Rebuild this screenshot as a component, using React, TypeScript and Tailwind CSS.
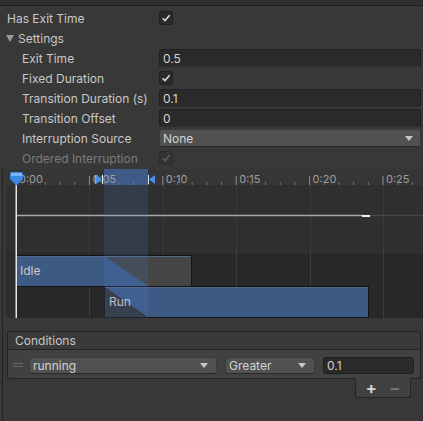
import React from "react";

const Check = ({ dim }: { dim?: boolean }) => (
  <div
    className={`w-[14px] h-[14px] rounded-[3px] border flex items-center justify-center ${
      dim ? "bg-[#333333] border-[#2c2c2c]" : "bg-[#2a2a2a] border-[#1f1f1f]"
    }`}
  >
    <svg width="10" height="10" viewBox="0 0 10 10">
      <path d="M1.6 5.3 L4 7.6 L8.6 2.3" fill="none" stroke={dim ? "#606060" : "#dcdcdc"} strokeWidth="1.5" />
    </svg>
  </div>
);

const Arrow = () => (
  <svg width="8" height="5" viewBox="0 0 8 5">
    <path d="M0 0 H8 L4 5 Z" fill="#c8c8c8" />
  </svg>
);

const Row = ({ label, indent, dim, children }: { label: React.ReactNode; indent?: boolean; dim?: boolean; children?: React.ReactNode }) => (
  <div className="flex h-[18px] items-center mt-[2px]">
    <div className={`w-[159px] shrink-0 whitespace-nowrap pt-[2px] ${indent ? "pl-[22px]" : "pl-[7px]"} ${dim ? "text-[#7c7c7c]" : "text-[#c8c8c8]"}`}>
      {label}
    </div>
    <div className="flex-1 pr-[2px] flex items-center">{children}</div>
  </div>
);

const Field = ({ v }: { v: string }) => (
  <div className="w-full h-[18px] bg-[#2a2a2a] border border-[#212121] border-b-[#2e2e2e] rounded-[3px] flex items-center pl-[3px] pt-[2px] text-[#d2d2d2]">
    {v}
  </div>
);

const Timeline = () => {
  const W = 417;
  const x0 = 10;
  const u = 14.68;
  const ticks = [];
  for (let i = 0; i <= 28; i++) {
    const x = x0 + u * i;
    const major = i % 5 === 0;
    ticks.push(
      <line key={"t" + i} x1={x} x2={x} y1={major ? 7 : 13} y2={16} stroke={major ? "#8e8e8e" : "#747474"} strokeWidth={1} />
    );
    if (major) {
      ticks.push(
        <text key={"l" + i} x={x + 3} y={14} fontSize={11} fill="#9e9e9e" fontFamily="Inter, sans-serif">
          {`0:${String(i).padStart(2, "0")}`}
        </text>
      );
    }
  }
  const grid = [1, 2, 3, 4, 5].map((k) => x0 + u * 5 * k);
  return (
    <svg width={W} height={149} viewBox={`0 0 ${W} 149`} className="block">
      <rect x={0} y={0} width={W} height={16} fill="#363636" />
      <rect x={0} y={16} width={W} height={68} fill="#2f2f2f" />
      <rect x={0} y={84} width={W} height={2} fill="#292929" />
      <rect x={0} y={86} width={W} height={63} fill="#282828" />
      <rect x={0} y={84} width={9} height={65} fill="#2d2d2d" />
      {grid.map((g) => (
        <rect key={g} x={Math.round(g)} y={16} width={1} height={133} fill="#3b3b3b" />
      ))}
      <rect x={98} y={0} width={44} height={16} fill="#3e5b88" />
      {ticks}
      {/* curve */}
      <line x1={10} x2={358} y1={46.5} y2={46.5} stroke="#a9a9a9" strokeWidth={1.5} />
      <line x1={358} x2={W} y1={46.5} y2={46.5} stroke="#464646" strokeWidth={1.5} />
      <rect x={356} y={46} width={6} height={2} fill="#f0f0f0" />
      <rect x={362} y={46} width={2} height={2} fill="#f0f0f0" />
      {/* Idle */}
      <rect x={10.5} y={86.5} width={175} height={31} fill="#454545" stroke="#141414" />
      <polygon points="11,87 98,87 142,117 11,117" fill="#3d5a85" />
      <line x1={11} x2={185} y1={87.5} y2={87.5} stroke="#52698c" strokeWidth={1} />
      <text x={14} y={106} fontSize={12} fill="#c8c8c8" fontFamily="Inter, sans-serif">Idle</text>
      {/* Run */}
      <rect x={98.5} y={117.5} width={264} height={31} fill="#3d5a85" stroke="#141414" />
      <polygon points="99,118 142,148 99,148" fill="#343434" />
      <line x1={99} x2={362} y1={118.5} y2={118.5} stroke="#52698c" strokeWidth={1} />
      <text x={103} y={137} fontSize={12} fill="#c8c8c8" fontFamily="Inter, sans-serif">Run</text>
      {/* highlight */}
      <rect x={98} y={16} width={44} height={133} fill="rgba(80,130,210,0.16)" />
      {/* transition markers */}
      <rect x={89} y={6} width={1} height={9} fill="#9aa8bc" />
      <polygon points="90,6 96,10.5 90,15" fill="#4a90e8" />
      <rect x={96} y={6} width={1} height={9} fill="#d8e4f4" />
      <rect x={142} y={6} width={1} height={9} fill="#d8e4f4" />
      <polygon points="149,6 143,10.5 149,15" fill="#4a90e8" />
      {/* playhead */}
      <rect x={9.5} y={16} width={1.5} height={133} fill="#e6e6e6" />
      <path d="M4 5 Q4 3 6 3 H15 Q17 3 17 5 V10 L10.5 16.5 L4 10 Z" fill="#3b8ae6" />
      <path d="M5 5 Q5 4 6 4 H15 Q16 4 16 5 V7 H5 Z" fill="#7db4f5" />
    </svg>
  );
};

export default function App() {
  return (
    <div className="w-[423px] h-[421px] bg-[#383838] overflow-hidden text-[12px] leading-none text-[#c8c8c8] font-['Inter',sans-serif]">
      <div className="h-[6px] bg-[#2f2f2f] border-b border-[#1e1e1e]" />
      <div className="pt-[1px]">
        <Row label="Has Exit Time">
          <Check />
        </Row>
        <div className="flex h-[18px] items-center mt-[2px] pl-[6px]">
          <svg width="8" height="7" viewBox="0 0 8 7" className="mr-[4px]">
            <path d="M0 0 H8 L4 7 Z" fill="#9a9a9a" />
          </svg>
          <span className="pt-[2px]">Settings</span>
        </div>
        <Row label="Exit Time" indent>
          <Field v="0.5" />
        </Row>
        <Row label="Fixed Duration" indent>
          <Check />
        </Row>
        <Row label="Transition Duration (s)" indent>
          <Field v="0.1" />
        </Row>
        <Row label="Transition Offset" indent>
          <Field v="0" />
        </Row>
        <Row label="Interruption Source" indent>
          <div className="w-full h-[18px] bg-[#515151] border border-[#3a3a3a] border-b-[#282828] rounded-[3px] flex items-center justify-between pl-[3px] pr-[7px] text-[#d2d2d2]">
            <span className="pt-[2px]">None</span>
            <Arrow />
          </div>
        </Row>
        <Row label="Ordered Interruption" indent dim>
          <Check dim />
        </Row>
      </div>
      <div className="ml-[2px] mt-[2px] border-l border-[#232323] pl-[3px] h-[260px]">
        <Timeline />
        <div className="ml-[1px] w-[414px] mt-[13px]">
          <div className="h-[19px] bg-[#3a3a3a] border border-[#242424] rounded-t-[3px] flex items-center pl-[7px] pt-[1px] text-[#c8c8c8]">
            Conditions
          </div>
          <div className="h-[29px] bg-[#414141] border-x border-b border-[#242424] rounded-b-[3px] flex items-center pl-[5px] pt-[2px]">
            <div className="w-[10px] flex flex-col gap-[2px] mr-[6px]">
              <div className="h-[1px] bg-[#6a6a6a]" />
              <div className="h-[1px] bg-[#6a6a6a]" />
            </div>
            <div className="w-[188px] h-[17px] bg-[#515151] border border-[#3a3a3a] border-b-[#2a2a2a] rounded-[3px] flex items-center justify-between pl-[3px] pr-[8px] text-[#d2d2d2]">
              <span className="pt-[2px]">running</span>
              <Arrow />
            </div>
            <div className="w-[90px] ml-[8px] h-[17px] bg-[#515151] border border-[#3a3a3a] border-b-[#2a2a2a] rounded-[3px] flex items-center justify-between pl-[3px] pr-[8px] text-[#d2d2d2]">
              <span className="pt-[2px]">Greater</span>
              <Arrow />
            </div>
            <div className="w-[91px] ml-[8px] h-[17px] bg-[#2a2a2a] border border-[#1f1f1f] rounded-[3px] flex items-center pl-[3px] pt-[2px] text-[#d2d2d2]">
              0.1
            </div>
          </div>
          <div className="flex justify-end pr-[10px]">
            <div className="w-[56px] h-[20px] -mt-[1px] bg-[#414141] border-x border-b border-[#242424] rounded-b-[3px] flex items-center justify-center gap-[12px] pt-[1px]">
              <span className="text-[17px] font-semibold text-[#d8d8d8] leading-none">+</span>
              <span className="text-[17px] font-semibold text-[#777777] leading-none">−</span>
            </div>
          </div>
        </div>
      </div>
    </div>
  );
}
